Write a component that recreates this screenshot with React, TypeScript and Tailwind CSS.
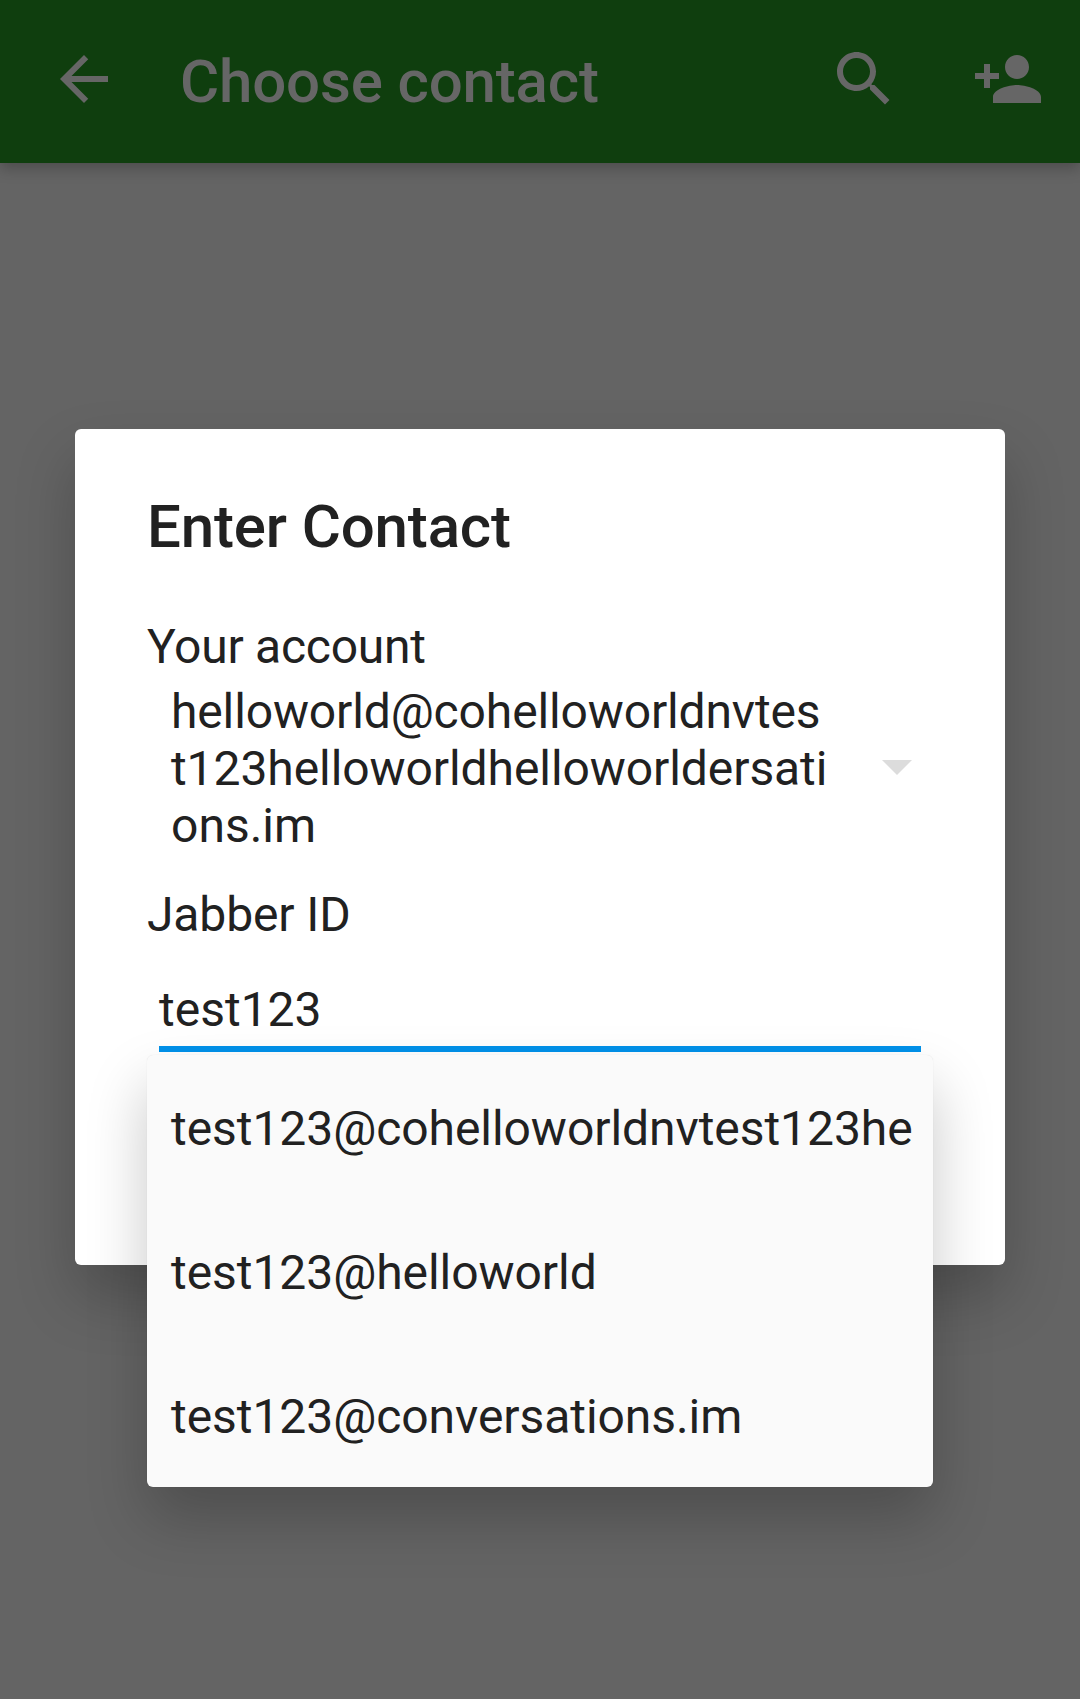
const suggestions = [
  'test123@cohelloworldnvtest123he',
  'test123@helloworld',
  'test123@conversations.im',
];

const accountLines = [
  { text: 'helloworld@cohelloworldnvtes', tracking: 'tracking-[-0.14px]' },
  { text: 't123helloworldhelloworldersati', tracking: 'tracking-[-0.08px]' },
  { text: 'ons.im', tracking: 'tracking-normal' },
];

function Icon({ d }: { d: string }) {
  return (
    <svg viewBox="0 0 24 24" className="size-[72px] shrink-0" fill="currentColor" aria-hidden="true">
      <path d={d} />
    </svg>
  );
}

function Toolbar() {
  return (
    <header className="flex h-[163px] items-start bg-[#0f3e0e] pt-[43px] pr-9 pl-12 text-[#666666] shadow-[0_5px_14px_rgba(0,0,0,0.25)]">
      <Icon d="M20 11H7.83l5.59-5.59L12 4l-8 8 8 8 1.41-1.41L7.83 13H20v-2z" />
      <h1 className="mt-0.5 ml-[60px] flex-1 text-[60px] leading-[73px] font-medium tracking-[-0.15px] whitespace-nowrap">Choose contact</h1>
      <div className="flex gap-[72px]">
        <Icon d="M15.5 14h-.79l-.28-.27C15.41 12.59 16 11.11 16 9.5 16 5.91 13.09 3 9.5 3S3 5.91 3 9.5 5.91 16 9.5 16c1.61 0 3.09-.59 4.23-1.57l.27.28v.79l5 4.99L20.49 19l-4.99-5zm-6 0C7.01 14 5 11.99 5 9.5S7.01 5 9.5 5 14 7.01 14 9.5 11.99 14 9.5 14z" />
        <Icon d="M15 12c2.21 0 4-1.79 4-4s-1.79-4-4-4-4 1.79-4 4 1.79 4 4 4zm-9-2V7H4v3H1v2h3v3h2v-3h3v-2H6zm9 4c-2.67 0-8 1.34-8 4v2h16v-2c0-2.66-5.33-4-8-4z" />
      </div>
    </header>
  );
}

function Suggestions() {
  return (
    <ul className="absolute top-full left-[-12px] mt-[9px] w-[786px] rounded-md bg-[#fafafa] tracking-[-0.06px] shadow-[0_31px_60px_rgba(0,0,0,0.22),0_0_1px_rgba(0,0,0,0.12)]">
      {suggestions.map((s) => (
        <li key={s} className="h-36 overflow-hidden pt-[45px] pl-6 leading-[57px] whitespace-nowrap">
          {s}
        </li>
      ))}
    </ul>
  );
}

export default function App() {
  return (
    <div className="h-[1699px] w-[1080px] overflow-hidden bg-[#646464] font-[Roboto,sans-serif]">
      <Toolbar />
      <main className="px-[75px] pt-[266px]">
        <section className="h-[836px] rounded-md bg-white px-[72px] pt-[62px] text-[48px] leading-[57px] text-[#212121] shadow-[0_31px_60px_rgba(0,0,0,0.22)]">
          <h2 className="text-[60px] leading-[71px] font-medium tracking-[-0.15px]">Enter Contact</h2>
          <p className="mt-14 tracking-[-0.25px]">Your account</p>
          <div className="mt-2 flex items-center justify-between pr-[21px] pl-6">
            <div>
              {accountLines.map(({ text, tracking }) => (
                <div key={text} className={tracking}>{text}</div>
              ))}
            </div>
            <svg viewBox="0 0 30 15" className="mb-[3px] h-[15px] w-[30px] shrink-0" aria-hidden="true">
              <path d="M0 0h30L15 15z" fill="#dcdcdc" />
            </svg>
          </div>
          <p className="mt-8 tracking-[-0.12px]">Jabber ID</p>
          <div className="relative mx-3 mt-[38px] border-b-6 border-[#0091ea] pb-2">
            <div>test123</div>
            <Suggestions />
          </div>
        </section>
      </main>
    </div>
  );
}
